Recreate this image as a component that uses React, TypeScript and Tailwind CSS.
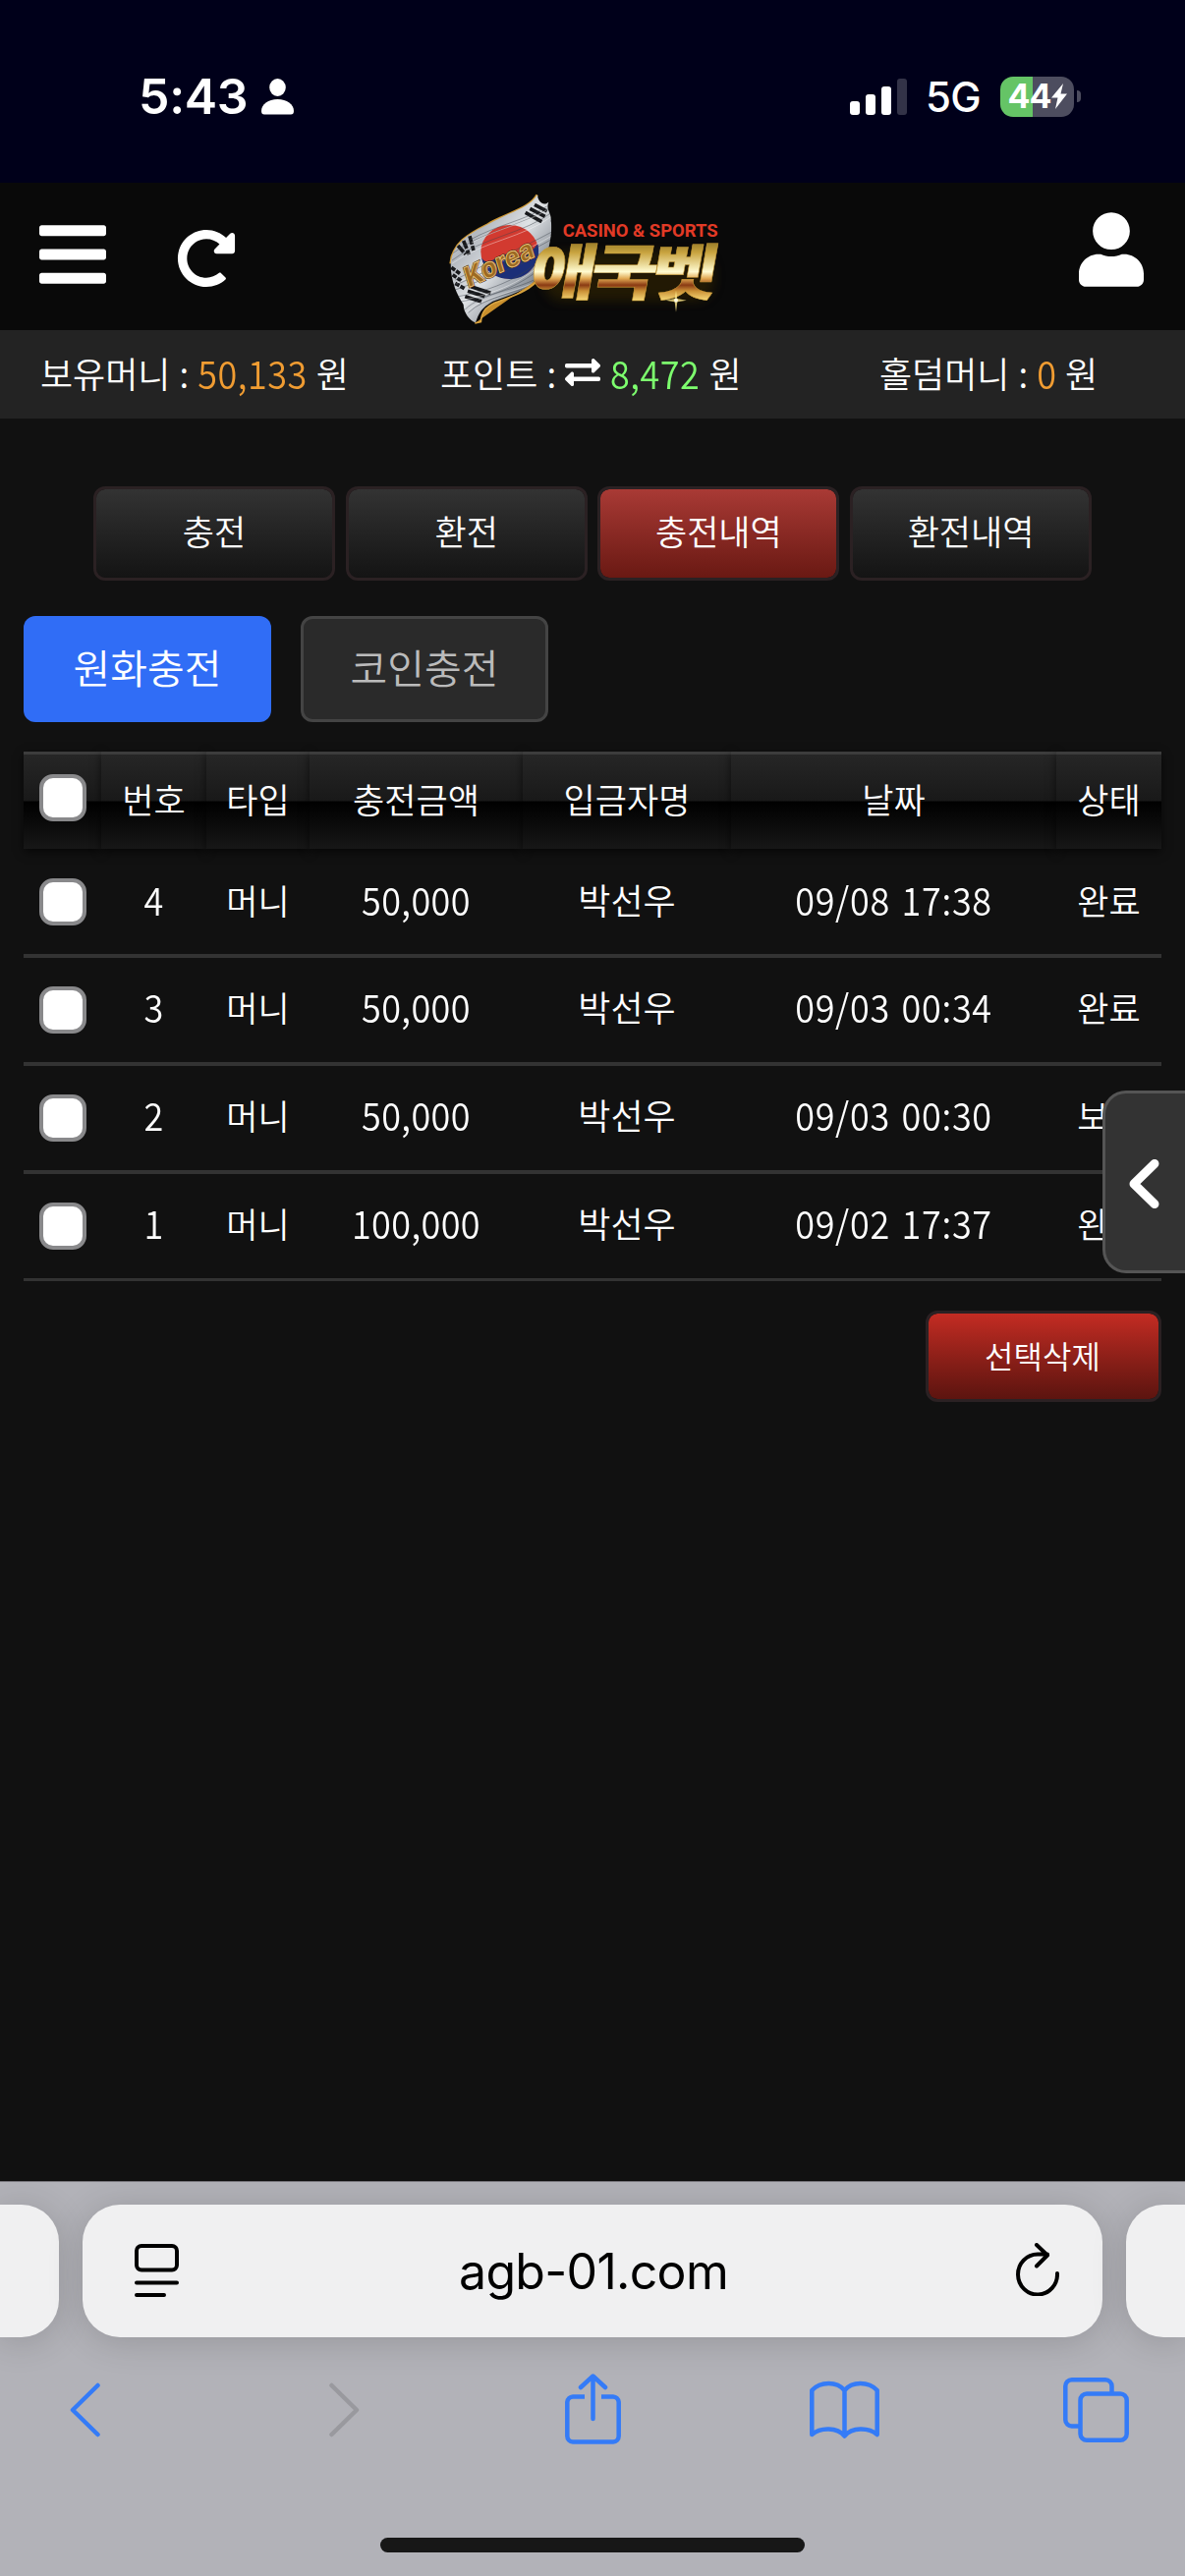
import React from "react";
import { FaBars, FaRedoAlt, FaUser, FaExchangeAlt } from "react-icons/fa";

const rows = [
  { no: "4", amount: "50,000", date: "09/08 17:38", status: "완료" },
  { no: "3", amount: "50,000", date: "09/03 00:34", status: "완료" },
  { no: "2", amount: "50,000", date: "09/03 00:30", status: "보류" },
  { no: "1", amount: "100,000", date: "09/02 17:37", status: "완료" },
];

const heads = ["번호", "타입", "충전금액", "입금자명", "날짜", "상태"];
const cols = "grid grid-cols-[79px_107px_105px_217px_212px_331px_107px]";

function StatusBar() {
  return (
    <div className="flex h-[186px] items-start justify-between bg-[#00001a] pl-[141px] pr-[106px] pt-[74px] font-['Inter'] text-white">
      <div className="flex h-12 items-center">
        <span className="w-[111px] whitespace-nowrap text-[50px] font-semibold leading-[48px] tracking-[-0.3px]">5:43</span>
        <svg className="ml-[14px]" width="33" height="37" viewBox="0 0 33 37" fill="#fff">
          <ellipse cx="16.5" cy="9" rx="8.3" ry="9" />
          <path d="M0 33C0 26 7 21 16.500 21S33 26 33 33C33 35.500 32 36.500 30 36.500H3C1 36.500 0 35.500 0 33Z" />
        </svg>
      </div>
      <div className="flex h-12 items-center">
        <svg width="58" height="37" viewBox="0 0 58 37" fill="#fff">
          <rect x="0" y="23" width="10" height="14" rx="3" />
          <rect x="16" y="16" width="10" height="21" rx="3" />
          <rect x="32" y="8" width="10" height="29" rx="3" />
          <rect x="48" y="0" width="10" height="37" rx="3" fill="#333348" />
        </svg>
        <span className="ml-[19px] w-[58px] translate-y-px whitespace-nowrap text-[42px] font-medium leading-[48px] tracking-[-0.8px]">5G</span>
        <div className="ml-[18px] flex h-[41px] w-[75px] items-center justify-center rounded-[13px] bg-linear-to-r from-[#65c466] from-44% to-[#4d4d5f] to-44%">
          <span className="text-[34px] font-bold leading-none tracking-[-1px]">44</span>
          <svg width="16" height="26" viewBox="0 0 16 26" fill="#fff">
            <path d="M12 0L0 14.500H6.500L4 26L16 10.500H9.500Z" />
          </svg>
        </div>
        <div className="ml-[3px] h-3 w-1 rounded-r-full bg-[#4d4d5f]" />
      </div>
    </div>
  );
}

function Logo() {
  return (
    <svg className="h-[150px] w-[310px]" viewBox="0 3 930 450">
      <defs>
        <linearGradient id="gold" x1="0" y1="0.14" x2="0" y2="0.86">
          <stop offset="0" stopColor="#7d661c" />
          <stop offset="0.25" stopColor="#c9a440" />
          <stop offset="0.55" stopColor="#fffbd0" />
          <stop offset="0.66" stopColor="#e0a650" />
          <stop offset="0.76" stopColor="#8a3a14" />
          <stop offset="0.85" stopColor="#c98f35" />
          <stop offset="1" stopColor="#f5d878" />
        </linearGradient>
        <linearGradient id="cloth" x1="0" y1="0" x2="1" y2="1">
          <stop offset="0" stopColor="#e6e8eb" />
          <stop offset="0.3" stopColor="#b3b8bf" />
          <stop offset="0.5" stopColor="#dfe2e5" />
          <stop offset="0.75" stopColor="#7f868f" />
          <stop offset="1" stopColor="#c5c9ce" />
        </linearGradient>
        <clipPath id="flag">
          <path d="M320 40C300 80 230 95 170 130C110 160 60 190 56 250C55 300 75 345 95 375C95 400 115 425 132 430C142 400 150 385 185 365C240 345 300 330 330 280C350 240 370 150 362 120C365 95 345 85 355 62C340 75 325 65 320 40Z" />
        </clipPath>
        <filter id="glow" x="-20%" y="-20%" width="140%" height="140%">
          <feGaussianBlur stdDeviation="16" />
        </filter>
      </defs>
      <path d="M320 40C300 80 230 95 170 130C110 160 60 190 56 250" fill="none" stroke="#d09a35" strokeWidth="8" />
      <path d="M330 290C300 335 240 350 190 370C160 385 150 400 148 428L130 432" fill="#c98f2c" stroke="#d9a440" strokeWidth="5" />
      <g clipPath="url(#flag)">
        <rect x="40" y="20" width="340" height="420" fill="url(#cloth)" />
        <ellipse cx="236" cy="214" rx="88" ry="82" fill="#d23a30" />
        <path d="M150 232C175 270 205 205 240 225C275 245 300 215 322 190C335 250 290 297 236 297C190 297 158 270 150 232Z" fill="#1b2f78" />
        <g stroke="#17181b" strokeWidth="11" fill="none">
          <path d="M284 94L334 122M298 82L344 106M312 70L350 90" />
          <path d="M78 195L102 222M95 180L112 222M114 166L126 210" strokeDasharray="26 5" />
          <path d="M100 350L150 366M108 334L160 350M118 320L178 340" />
          <path d="M58 262L86 282M62 284L90 304M70 310L98 326" strokeDasharray="14 4" />
        </g>
        <g stroke="#3f454e" strokeOpacity="0.45" strokeWidth="3" fill="none">
          <path d="M60 240C150 170 280 160 370 90M70 300C160 250 300 190 370 150M80 350C190 330 280 290 350 220M100 390C150 340 260 330 330 290M110 180C200 130 280 120 350 75M60 220C150 150 270 140 370 72M66 318C170 270 300 215 370 172M84 366C190 350 290 310 350 244M110 400C160 350 260 340 330 306M70 330C180 290 290 250 360 200" />
        </g>
        <g stroke="#fff" strokeOpacity="0.4" strokeWidth="3" fill="none">
          <path d="M60 250C150 182 280 172 370 102M74 310C170 262 300 205 370 162M90 362C190 342 290 302 350 232M105 398C150 350 260 338 330 298M120 186C200 142 280 130 350 86" />
        </g>
      </g>
      <g transform="translate(110 324) rotate(-25) skewX(-8)">
        <text fontFamily="Inter" fontWeight="800" fontSize="84" textLength="226" lengthAdjust="spacingAndGlyphs" fill="#9c6a22" stroke="#3a2208" strokeWidth="6" paintOrder="stroke">Korea</text>
        <text fontFamily="Inter" fontWeight="800" fontSize="84" textLength="226" lengthAdjust="spacingAndGlyphs" fill="none" stroke="#e9c27a" strokeWidth="3">Korea</text>
      </g>
      <text x="398" y="167" fontFamily="Roboto" fontWeight="700" fontSize="53" textLength="474" lengthAdjust="spacingAndGlyphs" fill="#e23a26">CASINO &amp; SPORTS</text>
      <rect x="340" y="215" width="520" height="150" rx="60" fill="#3a2a04" opacity="0.5" filter="url(#glow)" />
      <g transform="translate(288 346) skewX(-10) scale(1.2 1)">
        <text fontFamily="'Noto Sans CJK KR'" fontWeight="900" fontSize="186" letterSpacing="-17" fill="url(#gold)" stroke="#c99a35" strokeWidth="1.5">애국벳</text>
      </g>
      <g fill="#ffe88a">
        <path d="M744 332L748 357L776 362L748 367L744 398L740 367L712 362L740 357Z" opacity="0.8" />
        <circle cx="744" cy="362" r="6" fill="#fffbe0" />
      </g>
    </svg>
  );
}

function Header() {
  return (
    <div className="flex h-[150px] items-center bg-[#090909] pl-10 text-white">
      <FaBars className="h-[78px] w-[68px] -translate-y-0.5" />
      <FaRedoAlt className="ml-[72px] mt-[3px] size-[60px]" />
      <div className="ml-[200px]"><Logo /></div>
      <FaUser className="ml-[348px] h-[76px] w-[66px] -translate-y-[7px]" />
    </div>
  );
}

function Num({ children, className = "" }: { children: string; className?: string }) {
  return <span className={"inline-block origin-[50%_62%] scale-y-[1.09] " + className}>{children}</span>;
}

function MoneyBar() {
  return (
    <div className="flex h-[90px] items-center bg-[#232323] pl-[41px] pb-[5px] text-[36px] leading-none [word-spacing:1px]">
      <div className="w-[407px] whitespace-pre">보유머니 : <Num className="tracking-[0.5px] text-[#f09c32]">50,133</Num> 원</div>
      <div className="flex w-[447px] items-center whitespace-pre">
        포인트 : <FaExchangeAlt className="size-9" />
        <Num className="ml-[10px] tracking-[0.5px] text-[#7dff6e]">8,472</Num>{" 원"}
      </div>
      <div className="whitespace-pre">홀덤머니 : <Num className="text-[#f09c32]">0</Num> 원</div>
    </div>
  );
}

function Tab({ label, active }: { label: string; active?: boolean }) {
  return (
    <button
      className={
        "h-24 w-[246px] rounded-[12px] border-[3px] border-[#2b2123] bg-linear-to-b bg-clip-padding pb-[7px] text-[35px] leading-none " +
        (active ? "from-[#a93a35] to-[#6a1913]" : "from-[#333333] to-[#141414]")
      }
    >
      {label}
    </button>
  );
}

function Check() {
  return <span className="block size-12 shrink-0 rounded-[14px] border-4 border-[#89898b] bg-white" />;
}

function Table() {
  return (
    <div className="mx-6 mt-[30px]">
      <div className={cols + " h-[99px]"}>
        {["", ...heads].map((h, i) => (
          <div
            key={i}
            className="flex items-center justify-center border-t-[3px] border-[#3d3d3d] bg-[linear-gradient(#262626_0%,#191919_49%,#000_50%,#171717_100%)] pb-[8px] text-[35px] leading-none shadow-[0_3px_9px_rgba(0,0,0,0.6)]"
          >
            {i === 0 ? <Check /> : h}
          </div>
        ))}
      </div>
      {rows.map((r, i) => (
        <div
          key={r.no}
          className={
            cols +
            " items-center justify-items-center border-[#333] text-[36px] leading-none *:not-first:relative " +
            (i === 0
              ? "h-[111px] border-b-4 *:not-first:mb-[5px]"
              : i === 3
                ? "h-[109px] border-b-[3px] *:not-first:mb-2"
                : "h-[110px] border-b-4 *:not-first:mb-2")
          }
        >
          <Check />
          <Num>{r.no}</Num>
          <span className="text-[35px]">머니</span>
          <Num className="tracking-[0.4px]">{r.amount}</Num>
          <span>박선우</span>
          <Num className="tracking-[0.7px] [word-spacing:3px]">{r.date}</Num>
          <span className="text-[35px]">{r.status}</span>
        </div>
      ))}
      <div className="mt-[30px] flex justify-end">
        <button className="h-[93px] w-[240px] rounded-[12px] border-[3px] border-[#2b2123] bg-linear-to-b from-[#c42c23] to-[#5c140f] bg-clip-padding pb-1 pr-0.5 text-[32px] leading-none">
          선택삭제
        </button>
      </div>
    </div>
  );
}

function Safari() {
  return (
    <div className="h-[402px] bg-[#b2b2b8] font-['Inter'] font-normal text-black shadow-[inset_0_1px_0_#7c7a80]">
      <div className="flex justify-between overflow-hidden pb-10 pt-6">
        <div className="h-[135px] w-[60px] rounded-r-[38px] bg-[#f0f0f1] shadow-[0_4px_36px_rgba(0,0,0,0.16)]" />
        <div className="flex h-[135px] w-[1038px] items-center justify-between rounded-[38px] bg-[#f0f0f1] pl-[53px] pr-[44px] shadow-[0_4px_36px_rgba(0,0,0,0.16)]">
          <svg width="45" height="55" viewBox="0 0 45 55" fill="none" stroke="#000" strokeWidth="4" strokeLinecap="round">
            <rect x="2" y="2" width="41" height="24.500" rx="5" />
            <path d="M2 39.500H43M2 52H30" />
          </svg>
          <span className="-ml-[10px] w-[272px] whitespace-nowrap text-[50px] leading-none tracking-[-0.7px]">agb-01.com</span>
          <svg className="-translate-y-0.5" width="44" height="54" viewBox="0 0 44 54" fill="none" stroke="#000" strokeWidth="4" strokeLinecap="round" strokeLinejoin="round">
            <path d="M42 31A20 20.500 0 1 1 22 11.500H32M21 2L32 12.500L21 23.500" />
          </svg>
        </div>
        <div className="h-[135px] w-[60px] rounded-l-[38px] bg-[#f0f0f1] shadow-[0_4px_36px_rgba(0,0,0,0.16)]" />
      </div>
      <div className="-mt-[2px] flex h-[72px] items-center pl-[71px] text-[#347bf7]">
        <svg width="31" height="56" viewBox="0 0 31 56" fill="none" stroke="currentColor" strokeWidth="4.500" strokeLinecap="round" strokeLinejoin="round">
          <path d="M28.500 3L3 28L28.500 53" />
        </svg>
        <svg className="ml-[233px]" width="31" height="56" viewBox="0 0 31 56" fill="none" stroke="#99999e" strokeWidth="4.500" strokeLinecap="round" strokeLinejoin="round">
          <path d="M2.500 3L28 28L2.500 53" />
        </svg>
        <svg className="-mt-0.5 ml-[209px]" width="57" height="72" viewBox="0 0 57 72" fill="none" stroke="currentColor" strokeWidth="4.500" strokeLinejoin="round">
          <path d="M20 23.500H8A6 6 0 0 0 2.300 29V63.500A6 6 0 0 0 8 69.500H49A6 6 0 0 0 54.700 63.500V29A6 6 0 0 0 49 23.500H37" />
          <path d="M28.500 46V3M16 14L28.500 2.500L41 14" strokeLinecap="round" />
        </svg>
        <svg className="ml-[192px]" width="71" height="60" viewBox="0 0 71 60" fill="none" stroke="currentColor" strokeWidth="4.500" strokeLinejoin="round">
          <path d="M35.500 10C28 .5 11 .5 2.300 10V55C11 47.500 28 47.500 35.500 56.500C43 47.500 60 47.500 68.700 55V10C60 .5 43 .5 35.500 10ZM35.500 10V56" />
        </svg>
        <svg className="ml-[187px]" width="67" height="66" viewBox="0 0 67 66" fill="none" stroke="currentColor" strokeWidth="4.500">
          <path d="M16 49.500H9A6.500 6.500 0 0 1 2.300 43V9A6.500 6.500 0 0 1 9 2.300H43A6.500 6.500 0 0 1 49.500 9V15" />
          <rect x="17.500" y="16.500" width="47.200" height="47.200" rx="6.500" />
        </svg>
      </div>
      <div className="mx-auto mt-[94px] h-[15px] w-[432px] rounded-full bg-[#171717]" />
    </div>
  );
}

export default function App() {
  return (
    <div className="relative flex h-[2622px] w-[1206px] flex-col overflow-hidden bg-[#111] font-['Noto_Sans_CJK_KR',sans-serif] font-[350] text-white">
      <StatusBar />
      <Header />
      <MoneyBar />
      <div className="grow">
        <div className="mt-[69px] flex justify-center gap-[10.700px]">
          <Tab label="충전" />
          <Tab label="환전" />
          <Tab label="충전내역" active />
          <Tab label="환전내역" />
        </div>
        <div className="ml-6 mt-9 flex gap-[30px] text-[41px] leading-none">
          <button className="h-[108px] w-[252px] rounded-[12px] bg-[#306df6] pb-1.5">원화충전</button>
          <button className="h-[108px] w-[252px] rounded-[12px] border-[3px] border-[#444] bg-[#2a2a2a] pb-1.5 text-[#bbb]">코인충전</button>
        </div>
        <Table />
      </div>
      <Safari />
      <div className="absolute right-0 top-[1110px] flex h-[186px] w-[84px] items-center rounded-l-[24px] border-[3px] border-r-0 border-[#555] bg-[#333] pl-[22px] pt-[3px]">
        <svg width="34" height="52" viewBox="0 0 34 52" fill="none" stroke="#fff" strokeWidth="9" strokeLinecap="round" strokeLinejoin="round">
          <path d="M28 5.500L7 26L28 46.500" />
        </svg>
      </div>
    </div>
  );
}
